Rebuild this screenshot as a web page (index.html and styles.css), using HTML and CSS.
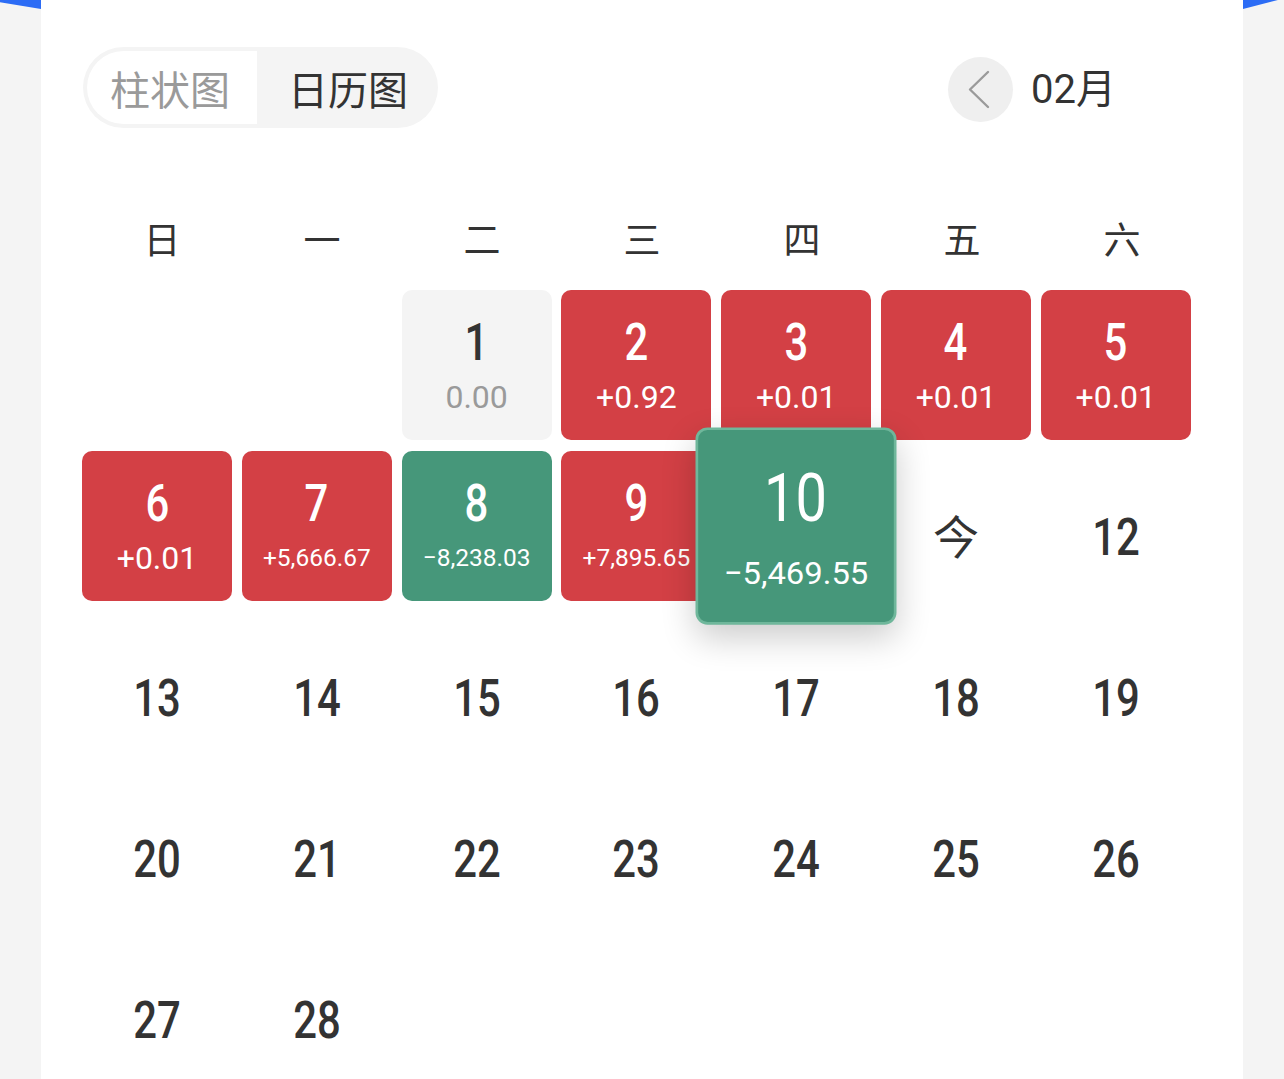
FILE: index.html
```html
<!DOCTYPE html>
<html lang="zh-CN">
<head>
<meta charset="utf-8">
<title>日历图</title>
<link rel="stylesheet" href="styles.css">
</head>
<body>
<div class="deco deco-left"></div>
<div class="deco deco-right"></div>
<main class="card">
  <header class="topbar">
    <div class="seg">
      <div class="seg-item seg-white">柱状图</div>
      <div class="seg-item seg-active">日历图</div>
    </div>
    <div class="month">
      <button class="back" type="button" aria-label="上个月">
        <svg width="65" height="65" viewBox="0 0 65 65"><polyline points="40,15 22,32.5 40,50" fill="none" stroke="#9a9a9a" stroke-width="2.4" stroke-linecap="round" stroke-linejoin="round"/></svg>
      </button>
      <span class="month-label">02月</span>
    </div>
  </header>

  <div class="weekdays">
    <div>日</div><div>一</div><div>二</div><div>三</div><div>四</div><div>五</div><div>六</div>
  </div>

  <div class="grid">
    <div class="cell"></div>
    <div class="cell"></div>
    <div class="cell flat"><span class="num">1</span><span class="val">0.00</span></div>
    <div class="cell up"><span class="num">2</span><span class="val">+0.92</span></div>
    <div class="cell up"><span class="num">3</span><span class="val">+0.01</span></div>
    <div class="cell up"><span class="num">4</span><span class="val">+0.01</span></div>
    <div class="cell up"><span class="num">5</span><span class="val">+0.01</span></div>

    <div class="cell up"><span class="num">6</span><span class="val">+0.01</span></div>
    <div class="cell up"><span class="num">7</span><span class="val small">+5,666.67</span></div>
    <div class="cell down"><span class="num">8</span><span class="val small">−8,238.03</span></div>
    <div class="cell up"><span class="num">9</span><span class="val small">+7,895.65</span></div>
    <div class="cell down active"><span class="num">10</span><span class="val small">−5,469.55</span></div>
    <div class="cell plain"><span class="today">今</span></div>
    <div class="cell plain"><span class="num">12</span></div>

    <div class="cell plain"><span class="num">13</span></div>
    <div class="cell plain"><span class="num">14</span></div>
    <div class="cell plain"><span class="num">15</span></div>
    <div class="cell plain"><span class="num">16</span></div>
    <div class="cell plain"><span class="num">17</span></div>
    <div class="cell plain"><span class="num">18</span></div>
    <div class="cell plain"><span class="num">19</span></div>

    <div class="cell plain"><span class="num">20</span></div>
    <div class="cell plain"><span class="num">21</span></div>
    <div class="cell plain"><span class="num">22</span></div>
    <div class="cell plain"><span class="num">23</span></div>
    <div class="cell plain"><span class="num">24</span></div>
    <div class="cell plain"><span class="num">25</span></div>
    <div class="cell plain"><span class="num">26</span></div>

    <div class="cell plain"><span class="num">27</span></div>
    <div class="cell plain"><span class="num">28</span></div>
  </div>
</main>
</body>
</html>
```

FILE: styles.css
```css
* { box-sizing: border-box; }

html, body {
  margin: 0;
  padding: 0;
}

body {
  background: #f4f4f4;
  font-family: "Noto Sans CJK SC", "Noto Sans", sans-serif;
  color: #333;
  overflow: hidden;
  height: 1079px;
  position: relative;
}

.deco {
  position: absolute;
  top: 0;
  width: 41px;
  height: 9px;
  background: #2c6cf5;
  z-index: 0;
}

.deco-left {
  left: 0;
  clip-path: polygon(0 0, 100% 0, 100% 100%, 0 25%);
}

.deco-right {
  left: 1243px;
  clip-path: polygon(0 0, 85% 0, 0 100%);
}

.card {
  position: relative;
  z-index: 1;
  margin: 0 41px;
  background: #fff;
  height: 1079px;
  overflow: hidden;
  padding: 47px 41px 0 41px;
}

.topbar {
  display: flex;
  align-items: center;
  justify-content: space-between;
}

.seg {
  display: flex;
  background: #f4f4f4;
  border-radius: 41px;
  padding: 4px 3px 4px 4px;
  height: 81px;
  width: 355px;
  margin-left: 1px;
}

.seg-item {
  display: flex;
  align-items: center;
  justify-content: center;
  font-size: 40px;
  height: 73px;
}

.seg-white {
  width: 170px;
  background: #fff;
  color: #9a9a9a;
  border-radius: 37px 0 0 37px;
  padding-right: 4px;
}

.seg-active {
  flex: 1;
  color: #333;
  padding-left: 4px;
}

.month {
  display: flex;
  align-items: center;
  gap: 18px;
  margin-right: 86px;
  margin-top: 4px;
}

.back {
  width: 65px;
  height: 65px;
  border-radius: 50%;
  border: none;
  padding: 0;
  background: #efefef;
  display: block;
  margin-left: 2px;
}

.back svg { display: block; }

.month-label {
  font-family: "Roboto", "Noto Sans CJK SC", sans-serif;
  font-size: 40px;
  color: #333;
  line-height: 1;
}

.weekdays {
  display: grid;
  grid-template-columns: repeat(7, 160px);
  height: 80px;
  margin-top: 70px;
  align-items: center;
  justify-items: center;
  font-size: 37px;
  color: #333;
}

.grid {
  display: grid;
  grid-template-columns: repeat(7, 150px);
  grid-auto-rows: 150px;
  column-gap: 9.8px;
  row-gap: 11px;
  margin-top: 12px;
}

.cell {
  border-radius: 10px;
  display: flex;
  flex-direction: column;
  align-items: center;
  padding-top: 24px;
  font-family: "Roboto", "Noto Sans", sans-serif;
}

.num {
  display: inline-block;
  font-size: 51px;
  font-weight: 500;
  line-height: 58px;
  transform: scaleX(0.82);
}

.val {
  font-size: 32px;
  line-height: 40px;
  margin-top: 5px;
  white-space: nowrap;
}

.val.small {
  font-size: 24.5px;
}

.flat {
  background: #f4f4f4;
}
.flat .num { color: #333; }
.flat .val { color: #9a9a9a; }

.up {
  background: #d34045;
  color: #fff;
}

.down {
  background: #46977a;
  color: #fff;
}

.active {
  position: relative;
  z-index: 2;
  transform: scale(1.34, 1.315);
  border: 2.3px solid #6fb79b;
  padding-top: 22.5px;
  box-shadow: 0 10px 26px rgba(0, 0, 0, 0.2);
  border-radius: 9px;
}

.active .num {
  font-weight: 400;
}

.active .val {
  margin-top: 8px;
}

.plain {
  padding-top: 58px;
  color: #333;
}

.today {
  font-family: "Noto Sans CJK SC", sans-serif;
  font-size: 46px;
  line-height: 58px;
  margin-top: -4px;
}
```
